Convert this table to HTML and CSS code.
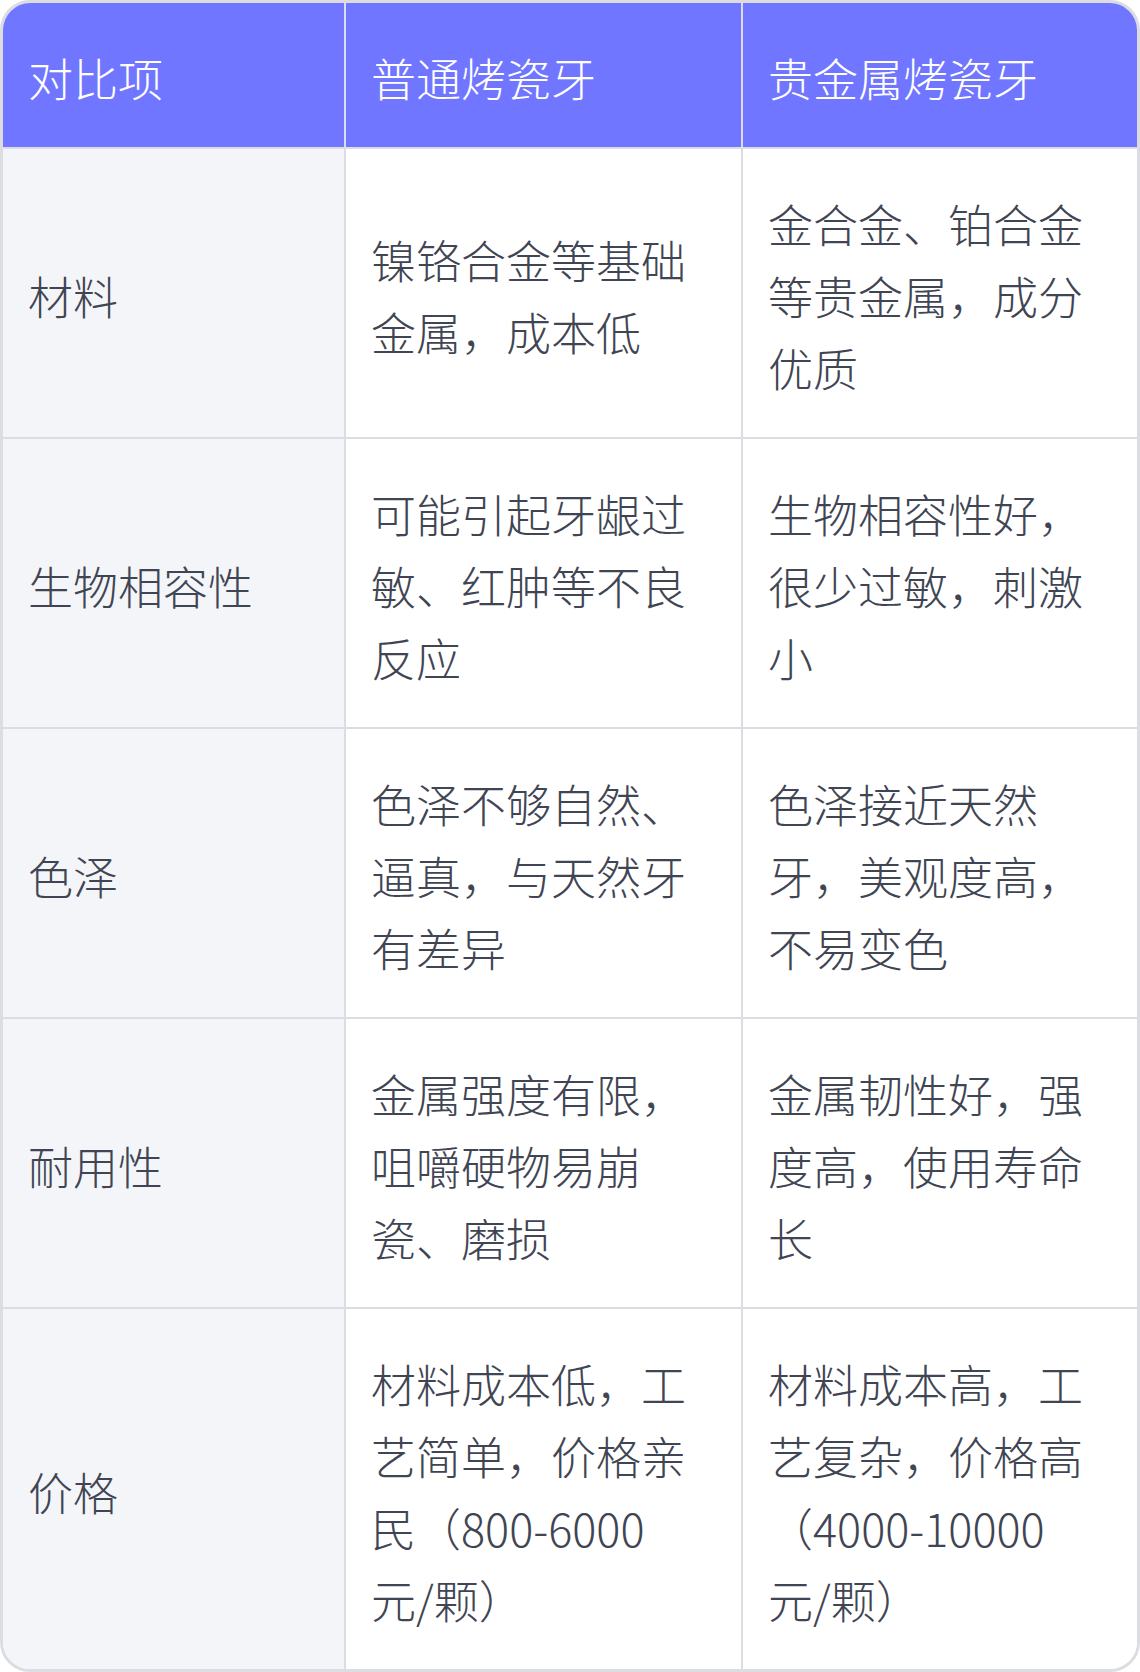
FILE: index.html
```html
<!DOCTYPE html>
<html lang="zh-CN">
<head>
<meta charset="utf-8">
<title>普通烤瓷牙与贵金属烤瓷牙对比</title>
<link rel="stylesheet" href="styles.css">
</head>
<body>
<div class="card">
  <table class="compare">
    <colgroup>
      <col class="c1">
      <col class="c2">
      <col class="c3">
    </colgroup>
    <thead>
      <tr>
        <th>对比项</th>
        <th>普通烤瓷牙</th>
        <th>贵金属烤瓷牙</th>
      </tr>
    </thead>
    <tbody>
      <tr>
        <td class="label">材料</td>
        <td>镍铬合金等基础金属，成本低</td>
        <td>金合金、铂合金等贵金属，成分优质</td>
      </tr>
      <tr>
        <td class="label">生物相容性</td>
        <td>可能引起牙龈过敏、红肿等不良反应</td>
        <td>生物相容性好，很少过敏，刺激小</td>
      </tr>
      <tr>
        <td class="label">色泽</td>
        <td>色泽不够自然、逼真，与天然牙有差异</td>
        <td>色泽接近天然牙，美观度高，不易变色</td>
      </tr>
      <tr>
        <td class="label">耐用性</td>
        <td>金属强度有限，咀嚼硬物易崩瓷、磨损</td>
        <td>金属韧性好，强度高，使用寿命长</td>
      </tr>
      <tr>
        <td class="label">价格</td>
        <td>材料成本低，工艺简单，价格亲民（800-6000元/颗）</td>
        <td>材料成本高，工艺复杂，价格高（4000-10000元/颗）</td>
      </tr>
    </tbody>
  </table>
</div>
</body>
</html>
```

FILE: styles.css
```css
html, body {
  margin: 0;
  padding: 0;
  background: #ffffff;
}

body {
  font-family: "Noto Sans CJK SC", "Noto Sans", sans-serif;
  color: #404553;
}

.card {
  width: 1140px;
  height: 1672px;
  box-sizing: border-box;
  border: 3px solid #dcdde3;
  border-radius: 30px;
  overflow: hidden;
  background: #ffffff;
}

.compare {
  width: 100%;
  border-collapse: collapse;
  table-layout: fixed;
}

.c1 { width: 342px; }
.c2 { width: 397px; }
.c3 { width: 395px; }

.compare th,
.compare td {
  padding: 39px 48px 33px 25px;
  font-size: 45px;
  line-height: 72px;
  font-weight: 300;
  text-align: left;
  vertical-align: middle;
  border-right: 2px solid #dcdde3;
  border-bottom: 2px solid #dcdde3;
}

.compare th:last-child,
.compare td:last-child {
  border-right: none;
}

.compare tbody tr:last-child td {
  border-bottom: none;
}

.compare th {
  background: #7076ff;
  color: #ffffff;
}

.compare td {
  background: #ffffff;
}

.compare td.label {
  background: #f4f5f9;
}
```
